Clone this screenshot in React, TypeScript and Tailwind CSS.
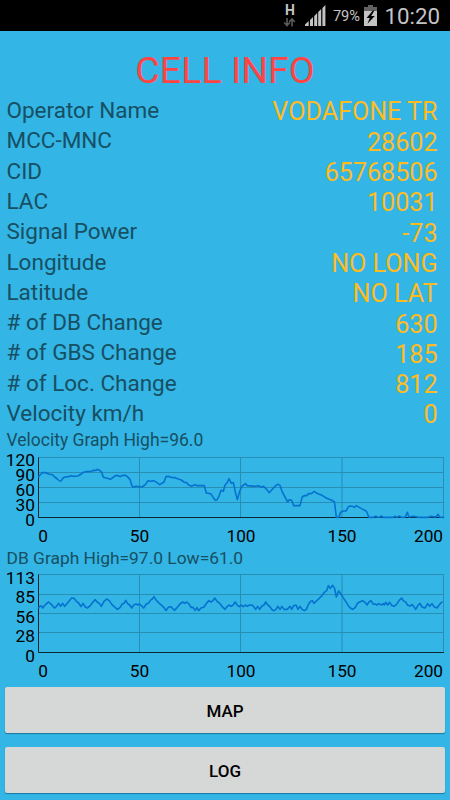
type Tick = { label: string; y: number; baseline: number };

const rows = [
  ["Operator Name", "VODAFONE TR"],
  ["MCC-MNC", "28602"],
  ["CID", "65768506"],
  ["LAC", "10031"],
  ["Signal Power", "-73"],
  ["Longitude", "NO LONG"],
  ["Latitude", "NO LAT"],
  ["# of DB Change", "630"],
  ["# of GBS Change", "185"],
  ["# of Loc. Change", "812"],
  ["Velocity km/h", "0"],
];

// samples are stored at three units per pixel
const velocity =
  "115,142 120,135 128,128 137,128 146,132 157,134 164,141 172,147 179,153 184,152 189,144 195,141 206,140 213,137 220,139 233,138 244,132 250,127 258,125 275,124 281,121 288,121 292,118 300,122 305,127 310,142 322,145 331,148 341,141 346,137 355,137 360,140 368,136 377,136 382,140 390,148 396,168 401,172 408,169 426,171 437,163 444,152 451,154 461,152 470,157 479,164 492,156 498,140 505,139 513,142 525,143 537,148 544,150 553,157 560,158 566,165 575,169 580,166 585,164 590,167 613,167 619,189 632,191 640,203 646,211 651,210 657,198 663,181 670,184 675,165 681,159 687,146 694,160 700,158 707,190 712,209 719,184 725,170 736,161 742,167 765,169 775,167 785,172 791,169 797,175 808,188 817,178 829,165 835,163 840,166 846,184 856,203 863,216 868,209 875,211 881,227 900,227 907,200 913,197 920,197 926,191 935,190 943,184 949,189 956,192 966,196 977,203 986,207 995,211 1003,215 1005,228 1009,262 1016,262 1022,247 1030,243 1038,243 1045,230 1052,228 1058,229 1063,232 1069,227 1079,233 1090,239 1099,243 1107,262 1120,262 1127,259 1133,262 1140,261 1144,258 1150,262 1180,262 1186,259 1191,262 1198,258 1204,262 1216,261 1222,247 1227,261 1240,259 1252,261 1260,262 1283,262 1293,259 1308,261 1314,253 1319,261 1331,262";

const db =
  "115,182 119,175 124,174 128,180 136,170 146,162 154,169 163,180 169,176 176,166 182,175 188,166 194,175 200,168 208,158 215,150 222,151 229,160 236,165 243,176 249,166 256,177 262,180 271,173 278,163 286,155 292,163 298,166 304,175 312,160 320,153 328,158 336,170 344,177 352,184 360,179 366,169 372,166 377,157 383,167 389,171 395,180 402,170 409,168 414,171 419,168 425,174 431,180 439,168 446,165 453,155 457,153 462,146 469,157 478,166 485,172 492,179 498,188 505,178 513,176 523,187 532,178 540,168 548,162 554,166 560,162 567,168 573,178 579,178 585,187 591,179 596,188 603,180 612,177 618,168 626,158 633,162 639,158 644,150 651,160 658,165 666,175 675,184 681,176 687,171 693,175 699,172 705,162 712,172 718,176 723,171 730,176 736,171 742,175 748,171 758,172 767,184 773,175 779,184 786,174 792,171 797,162 803,170 811,178 817,186 822,188 828,184 833,175 840,184 846,175 852,184 862,184 870,175 875,184 881,173 888,171 894,184 900,175 906,184 913,188 919,184 926,168 932,160 937,158 942,166 949,159 957,152 965,144 973,133 980,128 985,113 991,121 998,112 1004,122 1009,147 1016,129 1023,138 1029,148 1037,160 1045,173 1051,180 1058,184 1066,178 1073,165 1079,162 1087,158 1094,162 1101,171 1107,162 1113,158 1120,169 1126,168 1131,171 1137,167 1144,171 1150,167 1153,171 1157,163 1163,171 1169,163 1175,172 1182,175 1190,169 1197,158 1205,150 1210,158 1218,163 1223,172 1231,174 1236,170 1241,175 1247,184 1254,172 1260,166 1266,177 1275,180 1283,167 1289,175 1296,167 1302,176 1311,180 1317,172 1323,164 1328,162";

const velocityTicks: Tick[] = [
  { label: "120", y: 7.5, baseline: 16.4 },
  { label: "90", y: 22.5, baseline: 31.4 },
  { label: "60", y: 37.5, baseline: 46.4 },
  { label: "30", y: 52.5, baseline: 61.4 },
  { label: "0", y: 67.5, baseline: 76.4 },
];

const dbTicks: Tick[] = [
  { label: "113", y: 6.5, baseline: 15.6 },
  { label: "85", y: 26.5, baseline: 35.4 },
  { label: "56", y: 45.5, baseline: 55 },
  { label: "28", y: 64.5, baseline: 74.4 },
  { label: "0", y: 84.5, baseline: 94 },
];

const columns = [
  { label: "0", x: 38.5, text: 43 },
  { label: "50", x: 139.5, text: 139.5 },
  { label: "100", x: 240.5, text: 241 },
  { label: "150", x: 342, text: 342 },
  { label: "200", x: 443.5, text: 428.5 },
];

function Chart({
  ticks,
  points,
  shift,
  height,
  labelY,
}: {
  ticks: Tick[];
  points: string;
  shift: number;
  height: number;
  labelY: number;
}) {
  const top = ticks[0].y;
  const bottom = ticks[ticks.length - 1].y;

  return (
    <svg width="450" height={height} className="block text-[17.3px]">
      {/* Grid */}
      <g stroke="#288eb4" strokeWidth="1">
        {ticks.map((t) => (
          <line key={t.label} x1="38.5" x2="444" y1={t.y} y2={t.y} />
        ))}
        {columns.map((c) => (
          <line
            key={c.label}
            x1={c.x}
            x2={c.x}
            y1={top}
            y2={bottom}
            strokeWidth={c.label === "150" ? 2 : 1}
            strokeOpacity={c.label === "150" ? 0.5 : 1}
          />
        ))}
      </g>
      {/* Axes */}
      <path d={`M38.5 ${top}V${bottom}H444`} fill="none" stroke="#0b2731" />
      <polyline
        points={points}
        transform={`translate(0 ${shift}) scale(0.33333)`}
        fill="none"
        stroke="#0572d0"
        strokeWidth="4.8"
        strokeLinejoin="round"
      />
      {ticks.map((t) => (
        <text key={t.label} x="35" y={t.baseline} textAnchor="end">
          {t.label}
        </text>
      ))}
      {columns.map((c) => (
        <text key={c.label} x={c.text} y={labelY} textAnchor="middle">
          {c.label}
        </text>
      ))}
    </svg>
  );
}

function StatusBar() {
  return (
    <header className="flex h-[31px] items-center justify-end bg-black pr-[10px] text-[#c4c4c4]">
      {/* Data connection */}
      <div className="mr-[8.5px] flex h-[22px] w-[13px] flex-col items-center">
        <span className="text-[14px] leading-[11px] font-bold">H</span>
        <svg width="13" height="9" viewBox="0 0 13 9" fill="none" stroke="#5c5c5c" strokeWidth="1.6" className="mt-[2px]">
          <path d="M4 0v7M1.2 4.5 4 7.5 6.8 4.5M9 8.5v-7M6.2 4 9 1l2.8 3" />
        </svg>
      </div>
      {/* Signal */}
      <svg width="21" height="21" viewBox="0 0 21 21" fill="#c4c4c4" className="mr-[7px]">
        <path d="M0 21v-1.5L3.7 16v5zM5 21v-6l3-3v9zM9.2 21V11l3-3v13zM13.2 21V7l3-3v17zM17.4 21V3l3-3v21z" />
      </svg>
      <span className="mr-[4px] pt-[2px] text-[14.6px] leading-none">79%</span>
      {/* Battery */}
      <svg width="13" height="21" viewBox="0 0 13 21" className="mr-[7.5px]">
        <path d="M4 0h5v2h4v5H0V2h4z" fill="#626262" />
        <path d="M0 6h13v15H0z" fill="#c4c4c4" />
        <path d="M8.8 5.5 2.6 13h3.2L3.5 18.8 10.8 11H7.2l3.2-5.5z" fill="#000" />
      </svg>
      <span className="pt-[2px] text-[22.3px] leading-[29px]">10:20</span>
    </header>
  );
}

function AppButton({ label }: { label: string }) {
  return (
    <button className="h-[45.6px] w-full rounded-[2px] bg-[#d6d7d7] pt-[3px] text-[17px] leading-none font-medium text-black shadow-[0_1px_1px_rgba(0,60,90,0.5)]">
      {label}
    </button>
  );
}

export default function App() {
  return (
    <div className="h-[800px] w-[450px] overflow-hidden bg-[#33b5e5] font-['Roboto',sans-serif]">
      <StatusBar />

      <h1 className="h-[63.8px] pt-[17px] text-center text-[37.6px] leading-[44px] text-[#ff4444]">
        CELL INFO
      </h1>

      {/* Readings */}
      <dl>
        {rows.map(([label, value]) => (
          <div key={label} className="flex h-[30.3px] justify-between pr-[12.5px] pl-[6.5px] leading-[30.3px]">
            <dt className="pt-[0.3px] text-[22.5px] text-[#174f63]">{label}</dt>
            <dd className="pt-[2.7px] text-[25.1px] text-[#ffbb22]">{value}</dd>
          </div>
        ))}
      </dl>

      {/* Velocity */}
      <section className="h-[119.5px] pt-[2px]">
        <h2 className="h-[20px] pl-[6.5px] text-[17.5px] leading-[20px] text-[#174f63]">
          Velocity Graph High=96.0
        </h2>
        <Chart ticks={velocityTicks} points={velocity} shift={-20} height={97} labelY={91.6} />
      </section>

      {/* Signal strength */}
      <section className="h-[139.5px]">
        <h2 className="h-[20px] pl-[6.5px] text-[17.4px] leading-[20px] text-[#174f63]">
          DB Graph High=97.0 Low=61.0
        </h2>
        <Chart ticks={dbTicks} points={db} shift={-20} height={118} labelY={109} />
      </section>

      <div className="flex flex-col gap-[14.4px] px-[5px]">
        <AppButton label="MAP" />
        <AppButton label="LOG" />
      </div>
    </div>
  );
}
